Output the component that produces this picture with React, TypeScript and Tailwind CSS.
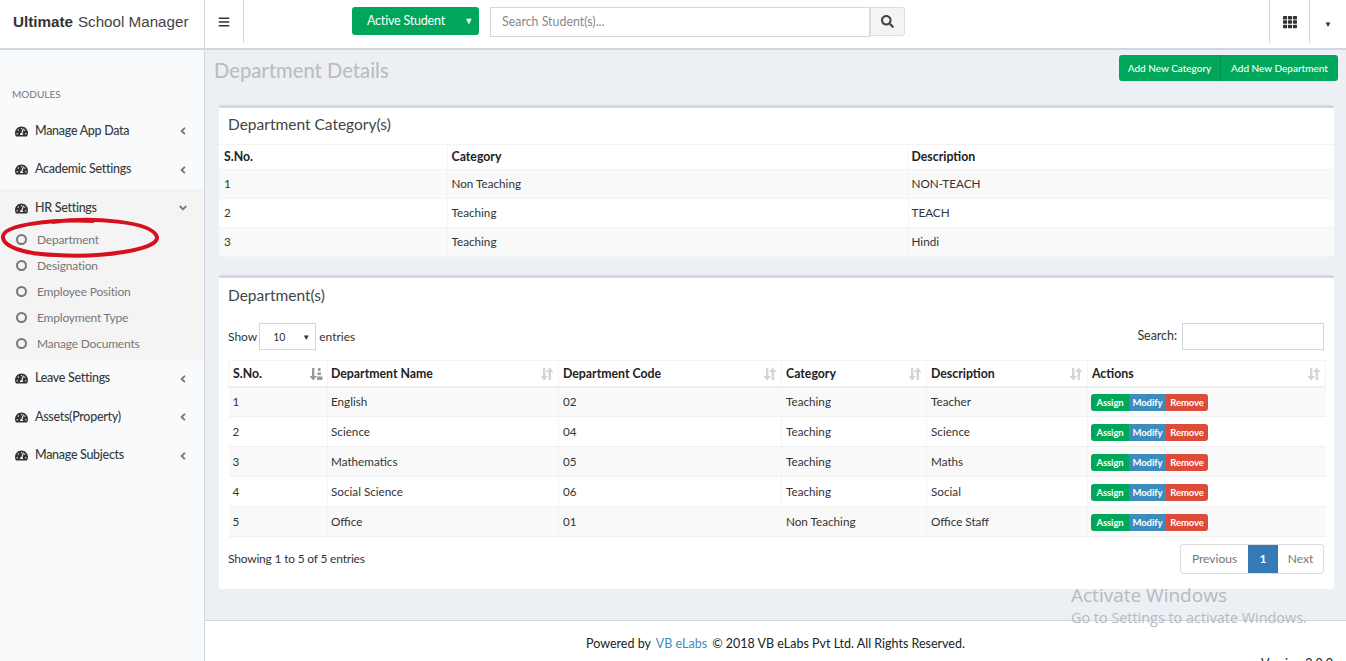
import { FaAngleDown, FaAngleLeft, FaBars, FaSearch, FaTachometerAlt, FaTh } from 'react-icons/fa';

type NavProps = {
    name: string,
    open?: boolean
}

const subItems = ['Department', 'Designation', 'Employee Position', 'Employment Type', 'Manage Documents']

const categories = [
    ['1', 'Non Teaching', 'NON-TEACH'],
    ['2', 'Teaching', 'TEACH'],
    ['3', 'Teaching', 'Hindi'],
]

const departments = [
    ['1', 'English', '02', 'Teaching', 'Teacher'],
    ['2', 'Science', '04', 'Teaching', 'Science'],
    ['3', 'Mathematics', '05', 'Teaching', 'Maths'],
    ['4', 'Social Science', '06', 'Teaching', 'Social'],
    ['5', 'Office', '01', 'Non Teaching', 'Office Staff'],
]

const headers = [
    { name: 'S.No.', width: 'w-[99px]' },
    { name: 'Department Name', width: 'w-[231px]' },
    { name: 'Department Code', width: 'w-[223px]' },
    { name: 'Category', width: 'w-[145px]' },
    { name: 'Description', width: 'w-[161px]' },
    { name: 'Actions', width: 'w-[238px]' },
]

const NavItem = (props: NavProps) => {
    return (
        <div className="flex h-[38.5px] items-center pl-[15px] pr-[15px] text-[12.5px] font-medium tracking-[-0.3px] text-[#3a3a3a]">
            <FaTachometerAlt className="mr-[7px] h-[13px] w-[13px] text-[#333]" />
            <span className="flex-1">{props.name}</span>
            {props.open ? <FaAngleDown className="h-3 w-3 text-[#777]" /> : <FaAngleLeft className="h-3 w-3 text-[#777]" />}
        </div>
    )
}

const SortIcon = ({ active }: { active?: boolean }) => {
    return (
        <svg viewBox="0 0 14 14" className={active ? 'h-[14px] w-[14px] text-[#999]' : 'h-[14px] w-[14px] text-[#d4d4d4]'} fill="currentColor">
            <path d="M3 1h2.4v8H8L4.2 13.5.5 9H3z" />
            {active
                ? <path d="M9 1h2.5v3H9zM8.5 5.5h3.5v2.5H8.5zM8 9.500h5.500V13H8z" />
                : <path d="M8.600 13h2.400V5h2.500L9.800.5 6.100 5h2.500z" />}
        </svg>
    )
}

const ActionButtons = () => {
    return (
        <div className="mt-[2px] flex text-center text-[9.5px] font-bold leading-[17px] tracking-[-0.1px] text-white">
            <span className="w-[38px] rounded-l-[3px] bg-[#00a65a]">Assign</span>
            <span className="w-[37px] bg-[#3c8dbc]">Modify</span>
            <span className="w-[42px] rounded-r-[3px] bg-[#dd4b39]">Remove</span>
        </div>
    )
}

const App = () => {
    return (
        <div className="relative flex h-[661px] flex-col overflow-hidden bg-white font-['Lato','Noto_Sans',sans-serif] text-[12px] text-[#333]">
            <header className="flex h-[50px] shrink-0 border-b-2 border-[#d2d6de] bg-white">
                <div className="flex w-[205px] shrink-0 items-center border-r border-[#d2d6de] pb-[4px] pl-[13px] font-['Liberation_Sans',sans-serif] text-[15.2px] text-[#444]">
                    <b className="mr-[5px] text-[#333]">Ultimate</b> School Manager
                </div>
                <div className="flex h-[43px] w-[39px] items-center justify-center border-r border-[#d2d6de]">
                    <FaBars className="h-[12px] w-[12px] text-[#333]" />
                </div>
                <div className="ml-[108px] mt-[7px] flex h-[28px] w-[127px] items-center justify-between rounded-[3px] bg-[#00a65a] pl-[15px] pr-[6px] text-[12.5px] tracking-[-0.2px] text-white">
                    <span>Active Student</span>
                    <span className="text-[9px]">▼</span>
                </div>
                <div className="ml-[11px] mt-[7px] flex h-[30px] w-[380px] items-center border border-[#d2d6de] pl-[11px] text-[12.4px] text-[#888]">
                    Search Student(s)...
                </div>
                <div className="mt-[7px] flex h-[29px] w-[35px] items-center justify-center rounded-r-[3px] border border-[#ddd] bg-[#f4f4f4]">
                    <FaSearch className="h-[13px] w-[13px] text-[#444]" />
                </div>
                <div className="ml-auto flex h-[43px]">
                    <div className="flex w-[41px] items-center justify-center border-x border-[#d2d6de]">
                        <FaTh className="h-[14px] w-[14px] text-[#333]" />
                    </div>
                    <div className="flex w-[36px] items-center justify-center pt-[5px] text-[8px] text-[#333]">▼</div>
                </div>
            </header>

            <div className="flex min-h-0 flex-1">
                <aside className="w-[205px] shrink-0 border-r border-[#d2d6de] bg-[#f9fafc] pt-[36px]">
                    <div className="mb-[9px] pl-[12px] text-[10px] leading-[17px] text-[#777]">MODULES</div>
                    <NavItem name="Manage App Data" />
                    <NavItem name="Academic Settings" />
                    <div className="bg-[#f4f4f5] pb-[3px]">
                        <NavItem name="HR Settings" open />
                        <div className="-mt-[1px]">
                            {subItems.map((s) => {
                                return (
                                    <div key={s} className="flex h-[26px] items-center pl-[16px] text-[12px] tracking-[-0.2px] text-[#777]">
                                        <span className="mr-[10px] h-[11px] w-[11px] rounded-full border-2 border-[#777]" />
                                        {s}
                                    </div>
                                )
                            })}
                        </div>
                    </div>
                    <NavItem name="Leave Settings" />
                    <NavItem name="Assets(Property)" />
                    <NavItem name="Manage Subjects" />
                </aside>

                <div className="flex min-w-0 flex-1 flex-col">
                    <main className="flex-1 bg-[#ecf0f5] pl-[14px] pr-[8px]">
                        <div className="flex h-[55px] items-start justify-between">
                            <h1 className="-ml-[5px] pt-[8px] text-[20.2px] font-medium leading-[24px] text-[#bdbdbd]">Department Details</h1>
                            <div className="mt-[5px] flex text-center text-[10px] font-medium leading-[26px] text-white">
                                <span className="w-[102px] rounded-l-[3px] border-r border-[#008d4c] bg-[#00a65a]">Add New Category</span>
                                <span className="w-[117px] rounded-r-[3px] bg-[#00a65a]">Add New Department</span>
                            </div>
                        </div>

                        <section className="mr-[4px] rounded-[3px] border-t-[3px] border-[#d2d6de] bg-white">
                            <h2 className="flex h-[36px] items-center pb-[2px] pl-[9px] text-[15.5px] text-[#444]">Department Category(s)</h2>
                            <table className="w-full table-fixed border-collapse text-[11.7px]">
                                <thead>
                                    <tr className="h-[25px] border-y border-[#f4f4f4] text-left text-[12.3px] text-[#222]">
                                        <th className="w-[228px] border-r border-[#f4f4f4] pl-[5px] pt-[1px]">S.No.</th>
                                        <th className="w-[461px] border-r border-[#f4f4f4] pl-[4px] pt-[1px]">Category</th>
                                        <th className="pl-[3px] pt-[1px]">Description</th>
                                    </tr>
                                </thead>
                                <tbody>
                                    {categories.map((c, i) => {
                                        return (
                                            <tr key={c[0]} className={i % 2 === 0 ? 'h-[29px] border-b border-[#f4f4f4] bg-[#f9f9f9]' : 'h-[29px] border-b border-[#f4f4f4] bg-white'}>
                                                <td className="border-r border-[#f4f4f4] pl-[5px]">{c[0]}</td>
                                                <td className="border-r border-[#f4f4f4] pl-[4px]">{c[1]}</td>
                                                <td className="pl-[3px]">{c[2]}</td>
                                            </tr>
                                        )
                                    })}
                                </tbody>
                            </table>
                        </section>

                        <section className="mr-[4px] mt-[18px] h-[314px] rounded-[3px] border-t-[3px] border-[#d2d6de] bg-white px-[9px]">
                            <h2 className="flex h-[34px] items-center pt-[2px] text-[15.5px] text-[#444]">Department(s)</h2>
                            <div className="mt-[11px] flex h-[27px] items-center justify-between">
                                <div className="flex items-center">
                                    Show
                                    <div className="ml-[2px] mr-[3px] flex h-[27px] w-[57px] items-center justify-between border border-[#d2d6de] px-[13px] pr-[5px] text-[10.5px]">
                                        <span className="pt-[2px]">10</span>
                                        <span className="text-[8px]">▼</span>
                                    </div>
                                    entries
                                </div>
                                <div className="mr-[1px] flex items-center">
                                    <span className="text-[12.4px]">Search:</span>
                                    <div className="ml-[5px] h-[27px] w-[142px] border border-[#d2d6de]" />
                                </div>
                            </div>
                            <table className="mt-[10px] w-[1097px] table-fixed border-collapse text-[11.7px]">
                                <thead>
                                    <tr className="h-[26px] border-b-2 border-[#f0f0f0] text-left text-[12.3px] text-[#222]">
                                        {headers.map((h, i) => {
                                            return (
                                                <th key={h.name} className={`${h.width} border border-b-0 border-[#f4f4f4] pr-[4px] pt-[1px] ${i === 1 ? 'pl-[3px]' : 'pl-[4px]'}`}>
                                                    <div className="flex items-center justify-between">
                                                        <span>{h.name}</span>
                                                        <SortIcon active={i === 0} />
                                                    </div>
                                                </th>
                                            )
                                        })}
                                    </tr>
                                </thead>
                                <tbody>
                                    {departments.map((d, i) => {
                                        return (
                                            <tr key={d[0]} className={i % 2 === 0 ? 'h-[30px] border-b border-[#f0f0f0] bg-[#f9f9f9]' : 'h-[30px] border-b border-[#f0f0f0] bg-white'}>
                                                {d.map((v, j) => {
                                                    return <td key={j} className={j === 1 ? 'border-r border-[#f4f4f4] pl-[3px]' : 'border-r border-[#f4f4f4] pl-[4px]'}>{v}</td>
                                                })}
                                                <td className="pl-[3px]"><ActionButtons /></td>
                                            </tr>
                                        )
                                    })}
                                </tbody>
                            </table>
                            <div className="mt-[7px] flex items-center justify-between">
                                <span className="tracking-[-0.2px]">Showing 1 to 5 of 5 entries</span>
                                <div className="mr-[1px] flex h-[30px] overflow-hidden rounded-[3px] border border-[#ddd] text-[12px] text-[#777]">
                                    <span className="flex w-[67px] items-center justify-center">Previous</span>
                                    <span className="flex w-[30px] items-center justify-center bg-[#337ab7] font-bold text-white">1</span>
                                    <span className="flex w-[45px] items-center justify-center">Next</span>
                                </div>
                            </div>
                        </section>
                    </main>

                    <footer className="relative h-[41px] shrink-0 border-t border-[#d2d6de] bg-white">
                        <div className="pt-[14px] text-center text-[12.5px] leading-[18px] text-[#222]">
                            Powered by <span className="mx-[2px] text-[#3c8dbc]">VB eLabs</span> © 2018 VB eLabs Pvt Ltd. All Rights Reserved.
                        </div>
                        <div className="absolute right-[13px] top-[34px] text-[12.5px] leading-[18px] text-[#222]">Version 2.0.0</div>
                    </footer>
                </div>
            </div>

            <svg className="pointer-events-none absolute left-0 top-[216px] h-[46px] w-[162px]" viewBox="0 0 162 46" fill="none">
                <path d="M52 6C92 1 152 5 157 21C159 34 100 42 56 39C22 38 2 30 3 20C5 9 50 3 94 5" stroke="#d7101f" strokeWidth="4" />
            </svg>

            <div className="pointer-events-none absolute left-[1071px] top-[583px] font-['Open_Sans',sans-serif] text-[#b6b9bd]">
                <div className="text-[19px] leading-[24px]">Activate Windows</div>
                <div className="text-[14.4px] leading-[22px]">Go to Settings to activate Windows.</div>
            </div>
        </div>
    )
}

export default App
